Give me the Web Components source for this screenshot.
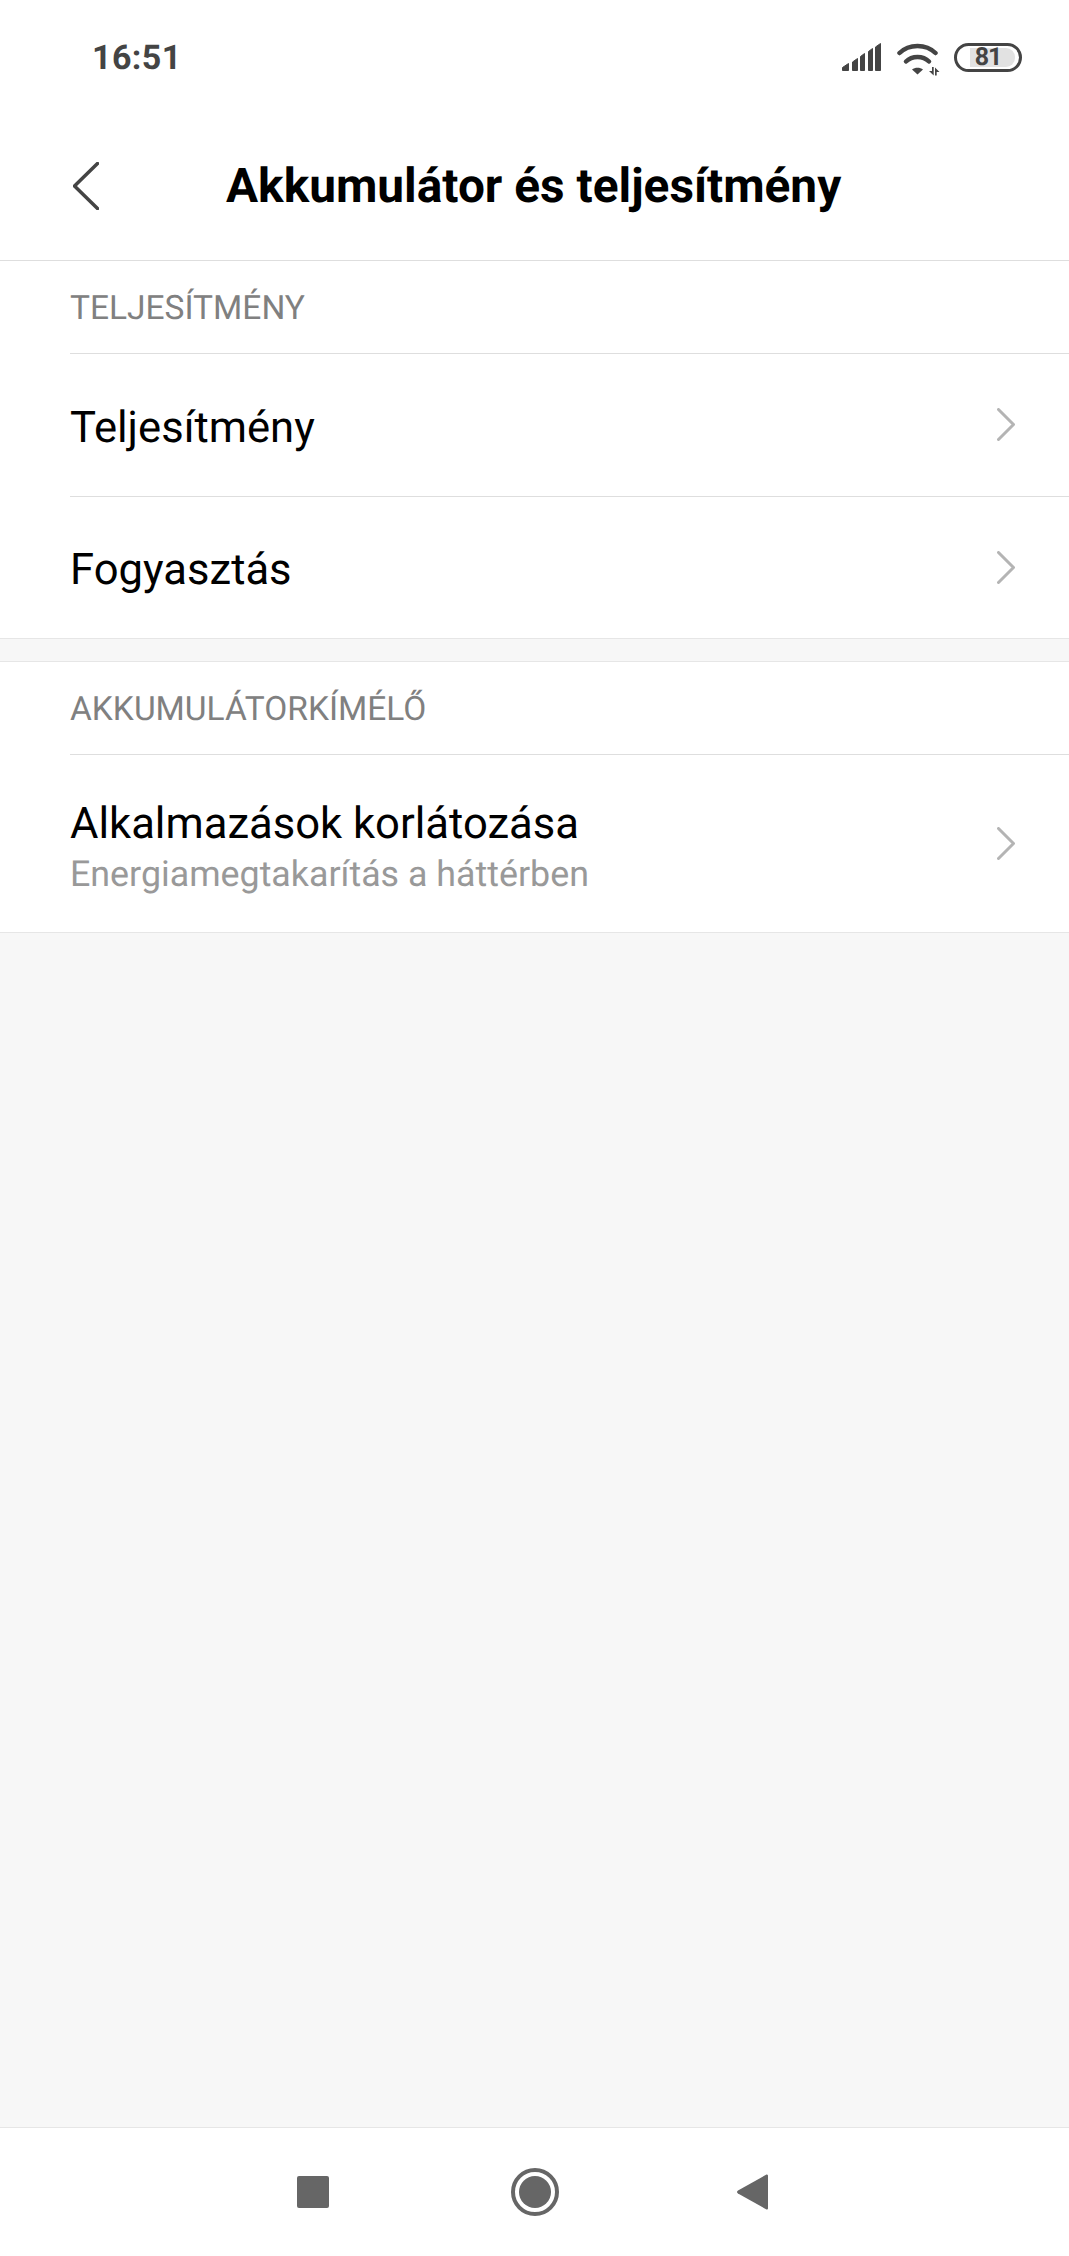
<!DOCTYPE html>
<html lang="en">
<head>
<meta charset="UTF-8">
<title>Akkumulátor és teljesítmény</title>
<style>
    html, body { margin: 0; padding: 0; background: #f7f7f7; }
    body { font-family: Roboto, "Liberation Sans", sans-serif; text-rendering: geometricPrecision; }
</style>
</head>
<body>
<phone-screen>
    <status-bar></status-bar>
    <title-bar>Akkumulátor és teljesítmény</title-bar>
    <settings-group>
        <group-label>TELJESÍTMÉNY</group-label>
        <settings-row>Teljesítmény</settings-row>
        <settings-row>Fogyasztás</settings-row>
    </settings-group>
    <settings-group second>
        <group-label>AKKUMULÁTORKÍMÉLŐ</group-label>
        <settings-row tall sub="Energiamegtakarítás a háttérben">Alkalmazások korlátozása</settings-row>
    </settings-group>
    <nav-bar></nav-bar>
</phone-screen>

<script>
    class PhoneScreen extends HTMLElement {
        constructor() {
            super();
            this.attachShadow({ mode: "open" }).innerHTML = `<style>
    :host{ display:flex; flex-direction:column; width:1069px; height:2256px; background:#f7f7f7; overflow:hidden; }
    ::slotted(nav-bar){ margin-top:auto; }
</style><slot></slot>`
        }
    }

    class StatusBar extends HTMLElement {
        constructor() {
            super();
            this.attachShadow({ mode: "open" }).innerHTML = `<style>
    :host{ display:flex; align-items:center; height:116px; padding:0 47px 0 92px; background:#fff; box-sizing:border-box; }
    .time{ font-size:34px; font-weight:700; color:#444; letter-spacing:.4px; }
    .icons{ margin-left:auto; display:flex; align-items:flex-start; padding-top:2px; }
    svg{ display:block; }
</style>
<span class="time">16:51</span>
<div class="icons">
    <svg width="40" height="28" viewBox="0 0 40 28" fill="#444" stroke="#444" stroke-width="1" stroke-linejoin="round">
        <path d="M1.500 27.500v-3l6-4v7z"/>
        <path d="M11.500 27.500V19l5-3.500v12z"/>
        <path d="M19.500 27.500V13.500l4-3v17z"/>
        <path d="M27.500 27.500V8.500l4-3v22z"/>
        <path d="M34.500 27.500V4l5-3.500v27z"/>
    </svg>
    <svg style="margin-left:16px" width="43" height="33" viewBox="0 0 43 33" fill="none" stroke="#444" stroke-width="4.500" stroke-linecap="round">
        <path d="M2.500 10C12 .5 29 .5 38.500 10"/>
        <path d="M9 18.500C15 12.500 26 12.500 32 18.500"/>
        <path d="M15 26.500C18 24 23 24 26 26.500L20.500 31.500z" fill="#444" stroke="none"/>
        <path d="M35 24h1.700v8.500L32 28h3zM38 24.500L42.500 29h-2.800v3.500H38z" fill="#444" stroke="none"/>
    </svg>
    <battery-pill style="margin-left:14px">81</battery-pill>
</div>`
        }
    }

    class BatteryPill extends HTMLElement {
        constructor() {
            super();
            this.attachShadow({ mode: "open" }).innerHTML = `<style>
    :host{ display:block; position:relative; width:68px; height:29px; box-sizing:border-box; border:3px solid #444; border-radius:15px; }
    .fill{ position:absolute; left:13px; top:2px; bottom:2px; width:45px; background:#e2e2e2; border-radius:0 9px 9px 0; }
    .num{ position:relative; display:block; text-align:center; font-size:25px; line-height:23px; font-weight:700; color:#444; letter-spacing:-1px; }
</style>
<div class="fill"></div><span class="num"><slot></slot></span>`
        }
    }

    class TitleBar extends HTMLElement {
        constructor() {
            super();
            this.attachShadow({ mode: "open" }).innerHTML = `<style>
    :host{ display:flex; align-items:center; height:145px; padding:0 0 5px 73px; background:#fff; box-sizing:border-box; border-bottom:1px solid #dedede; }
    svg{ display:block; flex:none; }
    h1{ margin:0 0 0 127px; font-size:47.800px; font-weight:700; color:#000; white-space:nowrap; }
</style>
<svg width="26" height="48" viewBox="0 0 26 48" fill="none" stroke="#444" stroke-width="3.500" stroke-linecap="round" stroke-linejoin="round">
    <path d="M24.500 1.500L1.500 24 24.500 46.500"/>
</svg>
<h1><slot></slot></h1>`
        }
    }

    class SettingsGroup extends HTMLElement {
        constructor() {
            super();
            this.attachShadow({ mode: "open" }).innerHTML = `<style>
    :host{ display:block; background:#fff; border-bottom:1px solid #e6e6e6; }
    :host([second]){ margin-top:22px; border-top:1px solid #e6e6e6; }
</style><slot></slot>`
        }
    }

    class GroupLabel extends HTMLElement {
        constructor() {
            super();
            this.attachShadow({ mode: "open" }).innerHTML = `<style>
    :host{ display:flex; align-items:center; height:92px; padding:2px 0 0 70px; font-size:33.500px; color:#808080; box-sizing:border-box; }
</style><slot></slot>`
        }
    }

    class SettingsRow extends HTMLElement {
        constructor() {
            super();
            this.attachShadow({ mode: "open" }).innerHTML = `<style>
    :host{ display:block; margin-left:70px; border-top:1px solid #dedede; }
    .row{ display:flex; align-items:center; height:141.500px; padding-right:54px; }
    :host([tall]) .row{ height:177px; }
    .txt{ flex:1; padding-top:6px; }
    .main{ font-size:43.600px; line-height:50px; color:#000; }
    .sub{ margin-top:4px; font-size:35.800px; line-height:42px; color:#999; }
    .sub:empty{ display:none; }
    svg{ display:block; flex:none; }
</style>
<div class="row">
    <div class="txt">
        <div class="main"><slot></slot></div>
        <div class="sub"></div>
    </div>
    <svg width="18" height="33" viewBox="0 0 18 33" fill="none" stroke="#b4b4b4" stroke-width="3" stroke-linecap="round" stroke-linejoin="round">
        <path d="M1.500 1.500L16.500 16.500 1.500 31.500"/>
    </svg>
</div>`
        }

        static get observedAttributes() {
            return ['sub']
        }

        attributeChangedCallback(name, oldValue, newValue) {
            this.shadowRoot.querySelector('.sub').textContent = newValue
        }
    }

    class NavBar extends HTMLElement {
        constructor() {
            super();
            this.attachShadow({ mode: "open" }).innerHTML = `<style>
    :host{ display:flex; align-items:center; height:129px; background:#fff; border-top:1px solid #e6e6e6; box-sizing:border-box; padding:0 0 0 297px; }
    svg{ display:block; flex:none; }
</style>
<svg width="32" height="32" viewBox="0 0 32 32"><rect width="32" height="32" rx="2" fill="#666"/></svg>
<svg style="margin-left:182px" width="48" height="48" viewBox="0 0 48 48" fill="none">
    <circle cx="24" cy="24" r="22" stroke="#666" stroke-width="4"/>
    <circle cx="24" cy="24" r="16" fill="#666"/>
</svg>
<svg style="margin-left:178px" width="31" height="36" viewBox="0 0 31 36"><path d="M29.500 .500c1 0 1.500.5 1.500 1.500v32c0 1-.5 1.500-1.500 1.500L1 19.500c-1.300-.8-1.300-2.200 0-3z" fill="#666"/></svg>`
        }
    }

    window.customElements.define('phone-screen', PhoneScreen);
    window.customElements.define('status-bar', StatusBar);
    window.customElements.define('battery-pill', BatteryPill);
    window.customElements.define('title-bar', TitleBar);
    window.customElements.define('settings-group', SettingsGroup);
    window.customElements.define('group-label', GroupLabel);
    window.customElements.define('settings-row', SettingsRow);
    window.customElements.define('nav-bar', NavBar);
</script>
</body>
</html>
